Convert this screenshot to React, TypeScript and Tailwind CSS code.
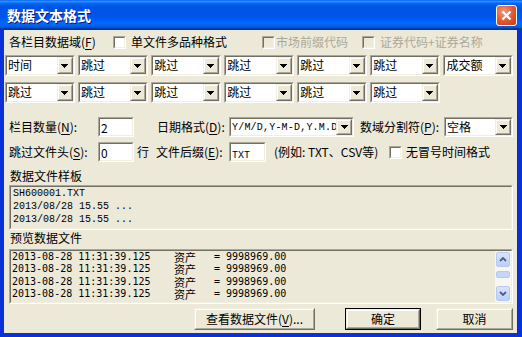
import React from 'react'

const SUNK_OUT = 'border border-t-[#aca899] border-l-[#aca899] border-b-white border-r-white'
const SUNK_IN = 'border border-t-[#716f64] border-l-[#716f64] border-b-[#f1efe2] border-r-[#f1efe2]'
const RAISE_OUT = 'border border-t-[#f1efe2] border-l-[#f1efe2] border-b-[#716f64] border-r-[#716f64]'
const RAISE_IN = 'border border-t-white border-l-white border-b-[#aca899] border-r-[#aca899]'

const Key = ({ k }: { k: string }) => (
  <>
    (<span className="underline underline-offset-2">{k}</span>)
  </>
)

function DropBtn() {
  return (
    <div className={`w-[16px] h-full flex ${RAISE_OUT}`}>
      <div className={`flex-1 flex items-center justify-center bg-[#ece9d8] ${RAISE_IN}`}>
        <svg width="7" height="4" viewBox="0 0 7 4" shapeRendering="crispEdges">
          <path d="M0 0h7v1h-1v1h-1v1h-1v1h-1v-1h-1v-1h-1v-1h-1z" fill="#000" />
        </svg>
      </div>
    </div>
  )
}

function Combo({ text, cls, mono }: { text: string; cls: string; mono?: boolean }) {
  return (
    <div className={`flex ${SUNK_OUT} ${cls}`}>
      <div className={`flex-1 flex min-w-0 bg-white ${SUNK_IN}`}>
        <span
          className={`flex-1 min-w-0 overflow-hidden whitespace-nowrap pl-[1px] ${
            mono ? "font-['Liberation_Mono',monospace] text-[10px] leading-[17px] tracking-[0.2px]" : 'text-[12px] leading-[16px]'
          }`}
        >
          {text}
        </span>
        <DropBtn />
      </div>
    </div>
  )
}

function Field({ text, cls, mono }: { text: string; cls: string; mono?: boolean }) {
  return (
    <div className={`flex ${SUNK_OUT} ${cls}`}>
      <div className={`flex-1 bg-white pl-[1px] ${SUNK_IN}`}>
        <span className={mono ? "font-['Liberation_Mono',monospace] text-[10px] leading-[15px]" : 'text-[12px] leading-[15px]'}>
          {text}
        </span>
      </div>
    </div>
  )
}

function Check({ disabled }: { disabled?: boolean }) {
  return (
    <div className={`w-[13px] h-[13px] shrink-0 flex ${SUNK_OUT}`}>
      <div className={`flex-1 ${SUNK_IN} ${disabled ? 'bg-[#ece9d8]' : 'bg-white'}`} />
    </div>
  )
}

function Btn({ children, cls, def }: { children: React.ReactNode; cls: string; def?: boolean }) {
  const inner = (
    <div className={`flex-1 flex ${RAISE_OUT}`}>
      <div className={`flex-1 flex items-center justify-center bg-[#ece9d8] text-[12px] ${RAISE_IN}`}>{children}</div>
    </div>
  )
  return <div className={`flex h-[22px] ${def ? 'border border-black' : ''} ${cls}`}>{inner}</div>
}

function ScrollArrow({ up }: { up?: boolean }) {
  return (
    <div className="h-[15px] rounded-[2px] border border-[#b8c9f1] bg-[linear-gradient(to_bottom,#d9e4fd,#bccefa)] flex items-center justify-center">
      <svg width="8" height="5" viewBox="0 0 8 5">
        <path d={up ? 'M1 4L4 1L7 4' : 'M1 1L4 4L7 1'} stroke="#4d6185" strokeWidth="1.8" fill="none" />
      </svg>
    </div>
  )
}

const preview = Array.from({ length: 4 }, () => ['2013-08-28 11:31:39.125', '资产', '= 9998969.00'])

export default function App() {
  return (
    <div className="w-[522px] h-[337px] flex flex-col font-['Noto_Sans_CJK_SC','Noto_Sans',sans-serif] text-black bg-[#0831d9] overflow-hidden">
      {/* title bar */}
      <div className="h-[30px] shrink-0 flex items-center bg-[linear-gradient(to_bottom,#0058ee_0%,#3593ff_4%,#288eff_6%,#127dff_8%,#036ffc_10%,#0262ee_14%,#0057e5_20%,#0054e3_24%,#0055eb_56%,#005bf5_66%,#026afe_76%,#0062ef_86%,#0052d6_92%,#0040ab_94%,#003092_100%)]">
        <span className="ml-[7px] flex-1 text-white font-bold text-[14px] leading-none [text-shadow:1px_1px_#0a1883]">
          数据文本格式
        </span>
        <div className="mr-[5px] w-[21px] h-[21px] rounded-[3px] border border-white bg-[radial-gradient(circle_at_35%_30%,#f09a7e,#e2552f_55%,#c33c16)] flex items-center justify-center">
          <svg width="11" height="11" viewBox="0 0 11 11">
            <path d="M1.5 1.5L9.5 9.5M9.5 1.5L1.5 9.5" stroke="#fff" strokeWidth="2.2" />
          </svg>
        </div>
      </div>

      {/* body */}
      <div className="flex-1 flex flex-col mx-[4px] mb-[4px] bg-[#ece9d8] pl-px pr-[4px] border-r border-r-[#0a2dbf]">
        {/* checkbox row */}
        <div className="mt-[5px] h-[14px] flex items-center text-[12px] leading-[14px] whitespace-nowrap">
          <span className="ml-[4px] w-[104px]">
            各栏目数据域<Key k="F" />
          </span>
          <div className="w-[149px] flex items-center gap-[5px]">
            <Check />
            <span>单文件多品种格式</span>
          </div>
          <div className="w-[100px] flex items-center gap-[1px] text-[#aca899]">
            <Check disabled />
            <span>市场前缀代码</span>
          </div>
          <div className="flex items-center gap-[5px] text-[#aca899]">
            <Check disabled />
            <span>证券代码+证券名称</span>
          </div>
        </div>

        {/* column combos */}
        <div className="mt-[6px] grid grid-cols-7 gap-x-[3.5px]">
          {['时间', '跳过', '跳过', '跳过', '跳过', '跳过', '成交额'].map((t, i) => (
            <Combo key={i} text={t} cls="h-[21px]" />
          ))}
        </div>
        <div className="mt-[6px] grid grid-cols-7 gap-x-[3.5px]">
          {['跳过', '跳过', '跳过', '跳过', '跳过', '跳过'].map((t, i) => (
            <Combo key={i} text={t} cls="h-[21px]" />
          ))}
        </div>

        {/* options row 1 */}
        <div className="mt-[14px] h-[20px] flex items-center text-[12px] whitespace-nowrap">
          <span className="ml-[4px] w-[89px]">
            栏目数量<Key k="N" />:
          </span>
          <Field text="2" cls="w-[36px] h-[20px]" />
          <span className="ml-[23px] w-[72px]">
            日期格式<Key k="D" />:
          </span>
          <Combo text="Y/M/D,Y-M-D,Y.M.D" mono cls="w-[125px] h-[20px]" />
          <span className="ml-[6px] w-[84px]">
            数域分割符<Key k="P" />:
          </span>
          <Combo text="空格" cls="w-[69px] h-[20px]" />
        </div>

        {/* options row 2 */}
        <div className="mt-[5px] h-[20px] flex items-center text-[12px] whitespace-nowrap">
          <span className="ml-[4px] w-[89px]">
            跳过文件头<Key k="S" />:
          </span>
          <Field text="0" cls="w-[36px] h-[20px]" />
          <span className="pl-[3px] w-[22px]">行</span>
          <span className="w-[73px]">
            文件后缀<Key k="E" />:
          </span>
          <Field text="TXT" mono cls="w-[37px] h-[20px]" />
          <span className="ml-[8px] w-[115px]">(例如: TXT、CSV等)</span>
          <Check />
          <span className="ml-[4px]">无冒号时间格式</span>
        </div>

        <span className="mt-[7px] ml-[5px] h-[14px] text-[12px] leading-[14px]">数据文件样板</span>

        <div className={`mt-[2px] ml-[4px] h-[45px] flex ${SUNK_OUT}`}>
          <div className={`flex-1 ${SUNK_IN} pl-[2px] font-['Liberation_Mono',monospace] text-[10px] leading-[13px] whitespace-pre`}>
            <div>SH600001.TXT</div>
            <div>2013/08/28 15.55 ...</div>
            <div>2013/08/28 15.55 ...</div>
          </div>
        </div>

        <span className="mt-[1px] ml-[5px] h-[14px] text-[12px] leading-[14px]">预览数据文件</span>

        <div className={`mt-[4px] ml-[4px] h-[55px] flex ${SUNK_OUT}`}>
          <div className={`flex-1 flex ${SUNK_IN}`}>
            <div className="flex-1 pl-[1px] font-['DejaVu_Sans_Mono',monospace] text-[10px] leading-[12.3px] whitespace-pre">
              {preview.map((r, i) => (
                <div key={i} className="flex h-[12.3px] items-center">
                  <span className="w-[162px]">{r[0]}</span>
                  <span className="w-[40px] font-['Noto_Sans_CJK_SC',sans-serif] text-[11px] leading-[12px]">{r[1]}</span>
                  <span>{r[2]}</span>
                </div>
              ))}
            </div>
            <div className="w-[16px] flex flex-col bg-[#f7f6f1] px-px pt-px pb-px">
              <ScrollArrow up />
              <div className="mt-[4px] h-[7px] rounded-[2px] border border-[#b8c9f1] bg-[#c6d5fb]" />
              <div className="flex-1" />
              <ScrollArrow />
            </div>
          </div>
        </div>

        {/* buttons */}
        <div className="mt-[4px] flex">
          <Btn cls="ml-[189px] w-[121px]">
            查看数据文件<Key k="V" />...
          </Btn>
          <Btn def cls="ml-[30px] w-[76px]">
            确定
          </Btn>
          <Btn cls="ml-[15px] w-[77px]">取消</Btn>
        </div>
      </div>
    </div>
  )
}
